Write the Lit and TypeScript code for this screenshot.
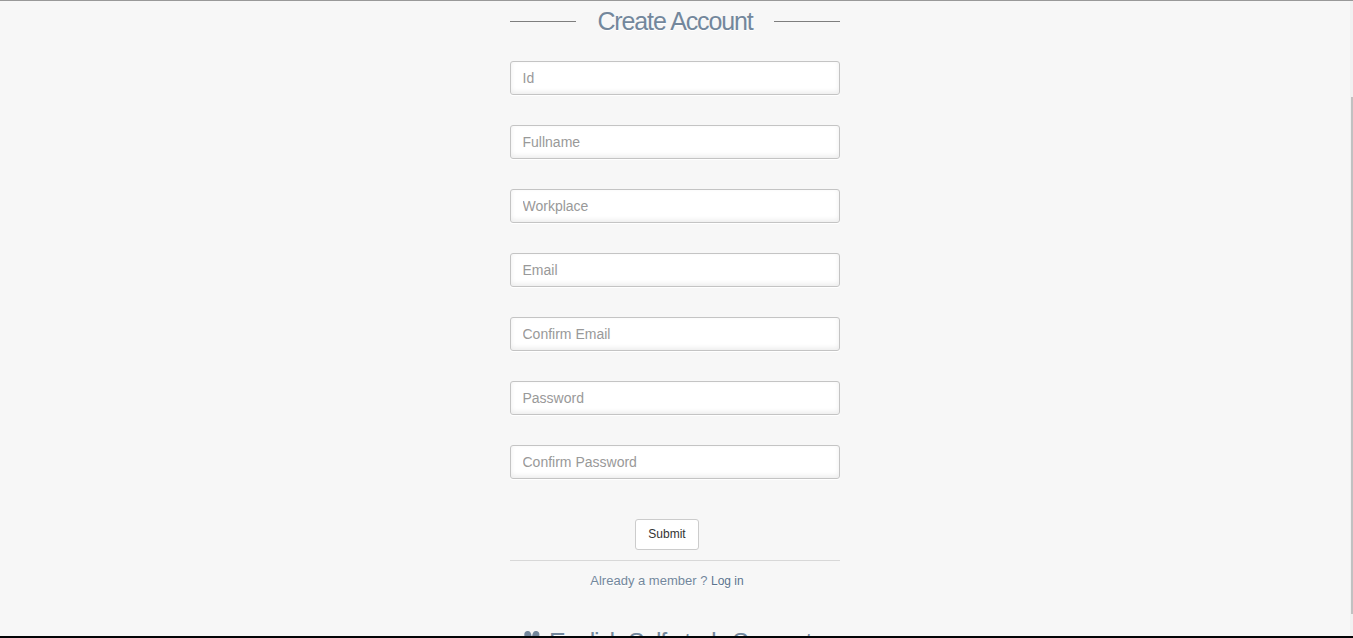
import { LitElement, html, css } from "lit";
import { customElement } from "lit/decorators.js";

const FIELDS = [
  { label: "Id", type: "text" },
  { label: "Fullname", type: "text" },
  { label: "Workplace", type: "text" },
  { label: "Email", type: "email" },
  { label: "Confirm Email", type: "email" },
  { label: "Password", type: "password" },
  { label: "Confirm Password", type: "password" },
];

@customElement("app-root")
export class AppRoot extends LitElement {
  static styles = css`
    :host {
      display: block;
      font-family: "Liberation Sans", Arial, sans-serif;
      color: #73879c;
    }
    * { box-sizing: border-box; }
    .page {
      display: grid;
      grid-template-columns: 1fr 3px;
      height: 638px;
      overflow: hidden;
      background: #f7f7f7;
      border-top: 1px solid #999;
      border-bottom: 2px solid #030406;
    }
    .view { overflow: hidden; min-height: 0; }
    .form {
      display: flex;
      flex-direction: column;
      width: 330px;
      margin-left: 510px;
      padding-top: 10px;
      text-shadow: 0 1px 0 #fff;
    }
    .title {
      display: flex;
      align-items: center;
      justify-content: space-between;
      height: 20px;
      margin-bottom: 30px;
    }
    .title::before, .title::after {
      content: "";
      width: 66px;
      height: 1px;
      background: #7e7e7e;
    }
    h1 {
      margin: 0;
      font-size: 25px;
      font-weight: 400;
      line-height: 20px;
      letter-spacing: -1.25px;
      white-space: nowrap;
    }
    .title h1 { letter-spacing: -1.13px; }
    .field {
      width: 100%;
      height: 34px;
      margin: 0 0 30px;
      padding: 6px 12px 6px 11.5px;
      border: 1px solid #c4c4c4;
      border-radius: 3px;
      background: #fff;
      box-shadow: 0 1px 0 #fff, inset 0 -2px 5px rgba(0, 0, 0, 0.08);
      font: 14px/20px "Liberation Sans", Arial, sans-serif;
      color: #777;
      outline: none;
    }
    .field::placeholder { color: #999; opacity: 1; }
    .submit {
      width: 64px;
      height: 31px;
      margin: 10px 0 10px 125px;
      padding: 0 0 2px;
      border: 1px solid #ccc;
      border-radius: 3px;
      background: #fff;
      font: 12px/18px "Liberation Sans", Arial, sans-serif;
      color: #333;
    }
    .member {
      border-top: 1px solid #d8d8d8;
      padding: 10px 16px 0 0;
      text-align: center;
      font-size: 13px;
      line-height: 20px;
      margin-bottom: 41px;
      white-space: nowrap;
    }
    .link { font-size: 12px; color: #5a738e; text-decoration: none; }
    .brand { display: flex; padding-left: 13px; gap: 8px; }
    .brand svg { display: block; width: 18px; height: 21px; margin-top: -1px; flex: none; }
    .rail { background: #f1f1f1; padding-top: 96px; }
    .thumb { height: 517px; margin-left: 1px; background: #c1c1c1; }
  `;

  render() {
    return html`
      <div class="page">
        <div class="view">
          <form class="form" @submit=${(e: Event) => e.preventDefault()}>
            <div class="title"><h1>Create Account</h1></div>
            ${FIELDS.map(
              (f) => html`<input class="field" type=${f.type} placeholder=${f.label} aria-label=${f.label} />`
            )}
            <button class="submit" type="submit">Submit</button>
            <div class="member">Already a member ? <a class="link" href="#">Log in</a></div>
            <div class="brand">
              <svg viewBox="0 0 18 21" fill="#73879c" aria-hidden="true">
                <ellipse cx="4.900" cy="4.500" rx="3.500" ry="4.500" transform="rotate(-12 4.900 4.500)" />
                <ellipse cx="12.800" cy="4.500" rx="3.500" ry="4.500" transform="rotate(12 12.800 4.500)" />
                <ellipse cx="2" cy="11" rx="2" ry="3" />
                <ellipse cx="16" cy="11" rx="2" ry="3" />
                <path d="M9 10c-2.500 0-6 5-6 7.500 0 3 3.500 1.500 6 1.500s6 1.500 6-1.500c0-2.500-3.500-7.500-6-7.500z" />
              </svg>
              <h1>English Self-study Support</h1>
            </div>
          </form>
        </div>
        <div class="rail"><div class="thumb"></div></div>
      </div>
    `;
  }
}
